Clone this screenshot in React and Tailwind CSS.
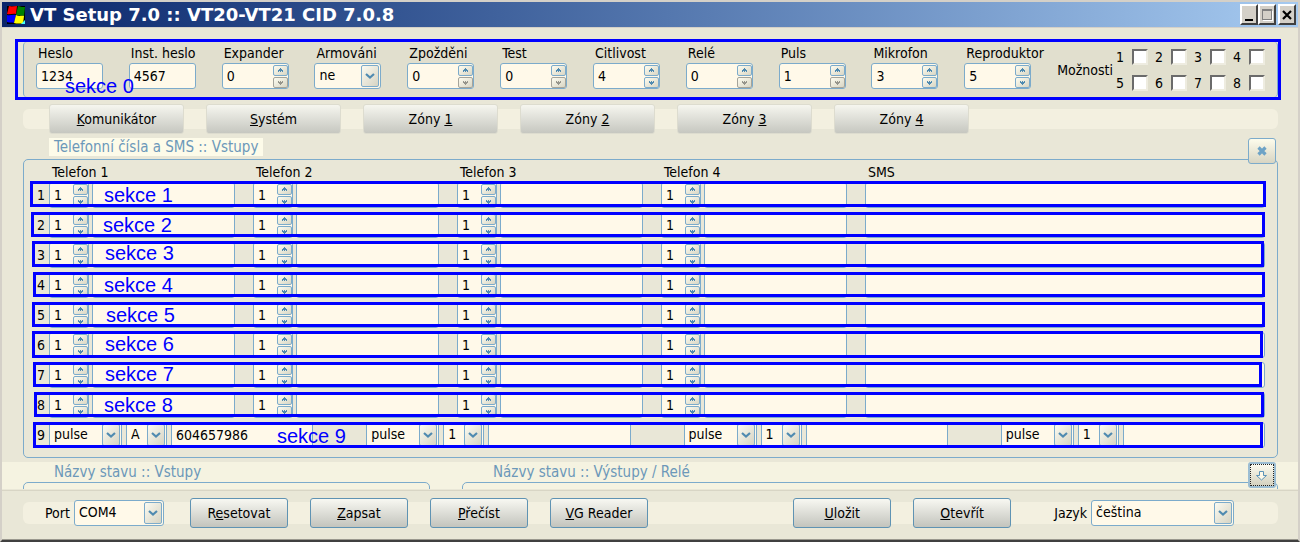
const settings = [
  { label: "Heslo", type: "text", value: "1234" },
  { label: "Inst. heslo", type: "text", value: "4567" },
  { label: "Expander", type: "spin", value: "0", min: true },
  { label: "Armováni", type: "select", value: "ne" },
  { label: "Zpožděni", type: "spin", value: "0", min: true },
  { label: "Test", type: "spin", value: "0", min: true },
  { label: "Citlivost", type: "spin", value: "4" },
  { label: "Relé", type: "spin", value: "0", min: true },
  { label: "Puls", type: "spin", value: "1", min: true },
  { label: "Mikrofon", type: "spin", value: "3" },
  { label: "Reproduktor", type: "spin", value: "5" },
];

const tabs = [
  ["", "K", "omunikátor"],
  ["", "S", "ystém"],
  ["Zóny ", "1", ""],
  ["Zóny ", "2", ""],
  ["Zóny ", "3", ""],
  ["Zóny ", "4", ""],
];

const phones = ["Telefon 1", "Telefon 2", "Telefon 3", "Telefon 4"];

// hand-placed section markers, one per row
const rows = [
  { n: 1, frame: "-left-[7px] -right-px -top-px h-[26px]", note: "left-[67px] top-[3px]" },
  { n: 2, frame: "-left-[6px] right-0 top-0 h-[25px]", note: "left-[66px] top-[3px]" },
  { n: 3, frame: "-left-[5px] right-px -top-px h-[26px]", note: "left-[68px] top-[1px]" },
  { n: 4, frame: "-left-[4px] right-0 top-0 h-[25px]", note: "left-[67px] top-[3px]" },
  { n: 5, frame: "-left-[5px] right-0 top-0 h-[25px]", note: "left-[69px] top-[3px]" },
  { n: 6, frame: "-left-[5px] right-[2px] -top-px h-[27px]", note: "left-[68px] top-[2px]" },
  { n: 7, frame: "-left-[4px] right-[3px] top-0 h-[25px]", note: "left-[68px] top-[2px]" },
  { n: 8, frame: "-left-[3px] right-px top-0 h-[25px]", note: "left-[67px] top-[3px]" },
];

const dialers = [
  { mode: "pulse", kind: "A", number: "604657986" },
  { mode: "pulse", kind: "1", number: "" },
  { mode: "pulse", kind: "1", number: "" },
  { mode: "pulse", kind: "1", number: "" },
];

const box = "h-[26px] rounded-[3px] border border-[#7cabcb] bg-[#fff9e9] outline-none";
const phoneGrid = "grid flex-1 grid-cols-[186fr_186fr_186fr_186fr_400fr] gap-[18px]";

const TextBox = ({ className = "", ...props }) => (
  <input type="text" className={`${box} block min-w-0 px-1 ${className}`} {...props} />
);

const SpinArrow = ({ down }) => (
  <svg width="5" height="5" viewBox="0 0 5 5" fill="currentColor" shapeRendering="crispEdges" className={down ? "rotate-180" : ""}>
    <path d="M2 0h1v1h1v1h1v2h-1v-1h-1v1h-1v-1h-1v1h-1v-2h1v-1h1z" />
  </svg>
);

const SpinButton = ({ down, disabled, label }) => (
  <button
    aria-label={label}
    disabled={disabled}
    className={`flex h-[11px] w-[15px] items-center justify-center rounded-[2px] border bg-linear-to-br from-[#fdfcf0] to-[#d9d6c4] ${
      disabled ? "border-[#a5a49b] text-[#96958c]" : "border-[#7cabcb] text-[#4f8ab0]"
    }`}
  >
    <SpinArrow down={down} />
  </button>
);

const Spin = ({ id, label, value, min, className = "" }) => (
  <div className={`relative ${className}`}>
    <TextBox id={id} aria-label={label} defaultValue={value} className="w-full" />
    <div className="absolute right-px top-[2px] flex flex-col gap-px">
      <SpinButton label={`${label} +`} />
      <SpinButton label={`${label} -`} down disabled={min} />
    </div>
  </div>
);

const Select = ({ id, label, value, className = "" }) => (
  <div className={`relative ${className}`}>
    <select id={id} aria-label={label} defaultValue={value} className={`${box} w-full appearance-none px-1 pb-[2px]`}>
      <option>{value}</option>
    </select>
    <span className="pointer-events-none absolute right-[2px] top-[2px] flex h-[22px] w-[18px] items-center justify-center rounded-[2px] border border-[#7cabcb] bg-linear-to-br from-[#fbfaf0] to-[#d6d4c4]">
      <svg width="10" height="6" viewBox="0 0 10 6" fill="none" stroke="#4f8ab0" strokeWidth="2.2">
        <path d="M1 1l4 3.500L9 1" />
      </svg>
    </span>
  </div>
);

const Note = ({ children, className }) => (
  <span className={`pointer-events-none absolute font-['Liberation_Sans',sans-serif] text-[20px] leading-5 text-[#0000ff] ${className}`}>
    {children}
  </span>
);

const Frame = ({ className }) => (
  <span className={`pointer-events-none absolute border-[3px] border-[#0000ff] ${className}`} />
);

const ActionButton = ({ before = "", hot, after }) => (
  <button className="h-[30px] w-[98px] rounded-[3px] border border-[#5f93b3] bg-linear-to-b from-[#f8f8f2] to-[#c3c4bd]">
    {before}
    <u>{hot}</u>
    {after}
  </button>
);

const WindowButton = ({ label, children }) => (
  <button
    aria-label={label}
    className="flex h-[21px] w-[18px] items-center justify-center border-2 border-b-[#404040] border-l-white border-r-[#404040] border-t-white bg-[#d4d0c8]"
  >
    {children}
  </button>
);

const TitleBar = () => (
  <header className="flex h-[26px] items-center border-b border-[#d4d0c8] bg-linear-to-r from-[#0a246a] to-[#a6caf0] pl-[5px] pr-[2px]">
    <svg width="18" height="18" viewBox="0 0 18 18">
      <rect width="18" height="18" fill="#000" />
      <path d="M2 0C5 1 7 0 10 0L9 8C6 7 3 9 0 8z" fill="#f00" />
      <path d="M11 0C14 1 16 1 18 1L17 10C14 9 12 10 9 9z" fill="#008000" />
      <path d="M0 9C3 10 6 8 9 9L7 17C5 16 3 17 0 16z" fill="#00f" />
      <path d="M9 9C12 11 15 9 17 10L16 18C13 17 10 18 7 17z" fill="#ff0" />
      <path d="M14 18l4-4v4z" fill="#4ff" />
    </svg>
    <h1 className="ml-[5px] flex-1 font-['DejaVu_Sans',sans-serif] text-[18px] font-bold leading-6 text-white">
      VT Setup 7.0 :: VT20-VT21 CID 7.0.8
    </h1>
    <WindowButton label="Minimize">
      <svg width="12" height="14">
        <path d="M2 11h8v2H2z" />
      </svg>
    </WindowButton>
    <WindowButton label="Maximize">
      <svg width="12" height="14" fill="none" stroke="#808080">
        <path d="M1 2.5h10M1.5 2v10M10.5 2v10M1 11.5h10M1 1.5h10" />
        <path d="M2 12.5h10M11.5 3v10" stroke="#fff" />
      </svg>
    </WindowButton>
    <span className="w-[2px]" />
    <WindowButton label="Close">
      <svg width="12" height="12" fill="none" stroke="#000" strokeWidth="2.2">
        <path d="M2 2l8 8M10 2l-8 8" />
      </svg>
    </WindowButton>
  </header>
);

const Settings = () => (
  <section className="relative ml-[13px] mr-[17px] mt-[11px] border-[3px] border-[#0000ff] pl-[5px]">
    <div className="flex h-[55px] items-start rounded-[4px] border-x border-[#7cabcb] bg-[#e1dfce] pl-[12px] pr-[12px]">
      <div className="grid flex-1 grid-cols-11 pt-[3px]">
        {settings.map((s, i) => (
          <div key={s.label} className="w-[67px]">
            <label htmlFor={`set-${i}`} className="mb-[2px] block whitespace-nowrap pl-[2px] leading-4">
              {s.label}
            </label>
            {s.type === "text" && <TextBox id={`set-${i}`} defaultValue={s.value} className="w-full" />}
            {s.type === "spin" && <Spin id={`set-${i}`} label={s.label} value={s.value} min={s.min} />}
            {s.type === "select" && <Select id={`set-${i}`} label={s.label} value={s.value} />}
          </div>
        ))}
      </div>
      <span className="mr-[3px] self-center">Možnosti</span>
      <div className="grid grid-cols-4 gap-x-[7px] gap-y-[10px] pt-[7px]">
        {[1, 2, 3, 4, 5, 6, 7, 8].map((n) => (
          <label key={n} className="flex h-4 items-center leading-4">
            <span className="w-4">{n}</span>
            <input
              type="checkbox"
              className="size-4 appearance-none border-2 border-b-[#eeece0] border-l-[#6b6b6b] border-r-[#eeece0] border-t-[#6b6b6b] bg-white"
            />
          </label>
        ))}
      </div>
    </div>
    <Note className="left-[47px] top-[34px]">sekce 0</Note>
  </section>
);

const PhoneTable = () => (
  <div className="rounded-[5px] border border-[#7cabcb] pb-[9px] pl-[13px] pr-[12px] pt-1">
    <div className="flex pl-[12px]">
      <div className={phoneGrid}>
        {phones.map((p) => (
          <span key={p} className="pl-[3px] leading-4">{p}</span>
        ))}
        <span className="pl-[3px] leading-4">SMS</span>
      </div>
    </div>
    <div className="mt-[2px] flex flex-col gap-1">
      {rows.map((row) => (
        <div key={row.n} className="relative flex items-center">
          <span className="w-[12px]">{row.n}</span>
          <div className={phoneGrid}>
            {phones.map((p) => (
              <div key={p} className="flex min-w-0 gap-[3px]">
                <Spin label={`${p} / ${row.n}`} value="1" className="w-[40px] shrink-0" />
                <TextBox aria-label={`${p} ${row.n}`} className="flex-1" />
              </div>
            ))}
            <TextBox aria-label={`SMS ${row.n}`} />
          </div>
          <Frame className={row.frame} />
          <Note className={row.note}>sekce {row.n}</Note>
        </div>
      ))}
      <div className="relative flex items-center">
        <span className="w-[12px]">9</span>
        <div className="grid flex-1 grid-cols-4 gap-[53px]">
          {dialers.map((d, i) => (
            <div key={i} className="flex min-w-0 gap-[4px]">
              <Select label={`Mode ${i + 1}`} value={d.mode} className="w-[73px] shrink-0" />
              <Select label={`Kind ${i + 1}`} value={d.kind} className="w-[41px] shrink-0" />
              <TextBox aria-label={`Number ${i + 1}`} defaultValue={d.number} className="flex-1" />
            </div>
          ))}
        </div>
        <Frame className="-left-[4px] right-[2px] top-0 h-[26px]" />
        <Note className="left-[240px] top-[4px]">sekce 9</Note>
      </div>
    </div>
  </div>
);

const StateNames = () => (
  <section className="relative mt-1 flex h-[27px] gap-[32px] bg-[#f5f3e1] pl-[21px] pr-[20px] text-[15px] text-[#6c98b9]">
    <div className="flex flex-[407] flex-col overflow-hidden">
      <h2 className="h-[21px] pl-[31px] leading-5">Názvy stavu :: Vstupy</h2>
      <div className="h-[12px] shrink-0 rounded-t-[5px] border border-[#7cabcb]" />
    </div>
    <div className="flex flex-[816] flex-col overflow-hidden">
      <h2 className="h-[21px] pl-[31px] leading-5">Názvy stavu :: Výstupy / Relé</h2>
      <div className="h-[12px] shrink-0 rounded-t-[5px] border border-[#7cabcb]" />
    </div>
    <button
      aria-label="Expand"
      className="absolute right-[22px] top-0 flex h-[26px] w-[28px] items-center justify-center rounded-[3px] border-2 border-[#9bbdd3] bg-linear-to-b from-[#fdfcf0] to-[#d3d0be] outline-1 -outline-offset-3 outline-dotted outline-[#222]"
    >
      <svg width="12" height="11" viewBox="0 0 12 11" fill="#fff9e9" stroke="#5b93b8">
        <path d="M3.5 1.5h4v4h3L5.5 10l-5-4.500h3z" />
      </svg>
    </button>
  </section>
);

const Footer = () => (
  <footer className="mt-px border-b border-t border-b-[#9a988e] border-t-[#d8d5c5] pb-[15px] pt-[11px]">
    <div className="ml-[21px] mr-[20px] flex h-[22px] items-center gap-[22px] rounded-[6px] bg-[#f3f0e0] pl-[22px] pr-[44px]">
      <div className="mr-[4px] flex items-center">
        <label htmlFor="port" className="pr-[4px]">Port</label>
        <Select id="port" label="Port" value="COM4" className="w-[90px]" />
      </div>
      <ActionButton before="R" hot="e" after="setovat" />
      <ActionButton hot="Z" after="apsat" />
      <ActionButton hot="P" after="řečíst" />
      <ActionButton hot="V" after="G Reader" />
      <span className="flex-1" />
      <ActionButton hot="U" after="ložit" />
      <ActionButton hot="O" after="tevřít" />
      <div className="ml-[21px] flex items-center">
        <label htmlFor="lang" className="pr-[4px]">Jazyk</label>
        <Select id="lang" label="Jazyk" value="čeština" className="w-[143px]" />
      </div>
    </div>
  </footer>
);

export default function App() {
  return (
    <div className="border-2 border-[#d4d0c8] border-b-[#404040] bg-[#e9e7d7] font-['DejaVu_Sans_Condensed','DejaVu_Sans',sans-serif] text-[14px] leading-5 text-black">
      <TitleBar />
      <Settings />
      <main className="ml-[21px] mr-[20px]">
        <nav className="mt-[9px] flex h-5 items-center gap-[22px] rounded-[6px] bg-[#f3f0e0] pl-[26px]">
          {tabs.map(([before, hot, after]) => (
            <button
              key={before + hot}
              className="h-[30px] w-[135px] rounded-[3px] border border-[#dddccf] bg-linear-to-b from-[#f6f6ef] to-[#c6c7c0]"
            >
              {before}
              <u>{hot}</u>
              {after}
            </button>
          ))}
        </nav>
        <div className="mt-[9px] flex h-[21px] items-start justify-between pl-[26px] pr-[2px]">
          <h2 className="bg-[#fdfbe9] px-[5px] text-[15px] leading-[18px] text-[#6c98b9]">
            Telefonní čísla a SMS :: Vstupy
          </h2>
          <button
            aria-label="Close panel"
            className="z-10 flex h-[26px] w-[28px] items-center justify-center rounded-[3px] border border-[#7cabcb] bg-linear-to-b from-[#fdfcec] to-[#d8d5c3]"
          >
            <svg width="10" height="10" viewBox="0 0 10 10" stroke="#6ea3c6" strokeWidth="3.2">
              <path d="M1.500 1.500l7 7M8.500 1.500l-7 7" />
            </svg>
          </button>
        </div>
        <PhoneTable />
      </main>
      <StateNames />
      <Footer />
    </div>
  );
}
